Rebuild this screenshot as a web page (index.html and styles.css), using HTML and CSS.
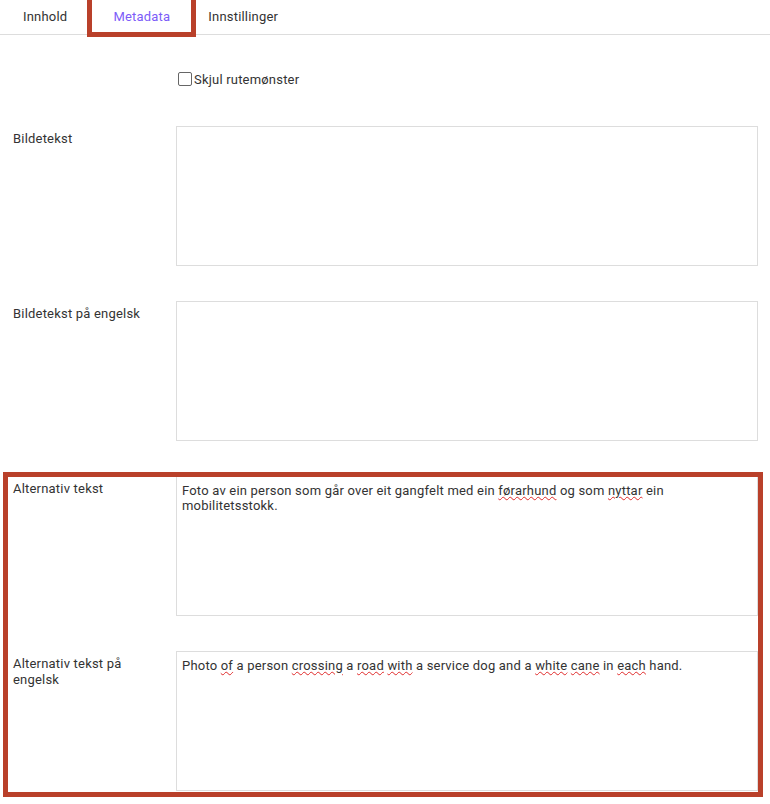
FILE: index.html
```html
<!DOCTYPE html>
<html lang="nn">
<head>
    <meta charset="UTF-8">
    <meta name="viewport" content="width=device-width, initial-scale=1.0">
    <title>Metadata</title>
    <link rel="stylesheet" href="styles.css">
</head>
<body>
    <div class="tabs">
        <div class="tab tab-first">Innhold</div>
        <div class="tab active marked">Metadata</div>
        <div class="tab tab-last">Innstillinger</div>
    </div>

    <div class="form">
        <div class="row check-row">
            <div class="label"></div>
            <label class="check">
                <span class="box"></span>Skjul rutemønster
            </label>
        </div>

        <div class="row">
            <div class="label">Bildetekst</div>
            <div class="field"></div>
        </div>

        <div class="row">
            <div class="label">Bildetekst på engelsk</div>
            <div class="field"></div>
        </div>

        <!-- marked group: alt text -->
        <div class="group marked-group">
            <div class="row">
                <div class="label">Alternativ tekst</div>
                <div class="field">Foto av ein person som går over eit gangfelt med ein <span class="spell">førarhund</span> og som <span class="spell">nyttar</span> ein mobilitetsstokk.</div>
            </div>

            <div class="row">
                <div class="label">Alternativ tekst på engelsk</div>
                <div class="field">Photo <span class="spell">of</span> a person <span class="spell">crossing</span> a <span class="spell">road</span> <span class="spell">with</span> a service dog and a <span class="spell">white</span> <span class="spell">cane</span> in <span class="spell">each</span> hand.</div>
            </div>
        </div>
    </div>
</body>
</html>
```

FILE: styles.css
```css
body {
    margin: 0;
    font-family: Roboto, "Liberation Sans", sans-serif;
    font-size: 13px;
    letter-spacing: 0.2px;
    color: #333;
    background: white;
}

.tabs {
    display: flex;
    height: 34px;
    border-bottom: 1px solid #ddd;
    padding-left: 4px;
}

.tab {
    padding: 0 19px;
    line-height: 34px;
    color: #333;
}

.tab.active {
    color: #7c5cf8;
    padding: 0 22px;
    margin-left: 5px;
}

.tab-last {
    padding-left: 16px;
}

/* red annotation boxes */
.marked {
    position: relative;
}

.marked::after {
    content: "";
    position: absolute;
    left: -4px;
    right: -4px;
    top: -6px;
    bottom: -3px;
    border: 5px solid #b9402a;
}

.form {
    padding: 34px 12px 0 13px;
}

.row {
    display: grid;
    grid-template-columns: 163px 1fr;
    margin-bottom: 35px;
}

.label {
    padding: 5px 13px 0 0;
    line-height: 16px;
}

.check-row {
    margin-bottom: 37px;
}

.check {
    display: flex;
    align-items: center;
    height: 20px;
    padding-left: 2px;
}

.box {
    width: 12px;
    height: 12px;
    border: 1px solid #666;
    border-radius: 2px;
    margin-right: 2px;
}

.field {
    height: 127px;
    border: 1px solid #ddd;
    padding: 6px 5px 5px 5px;
    line-height: 15px;
}

.spell {
    text-decoration: underline wavy #e02a2a;
    text-decoration-thickness: 1px;
    text-underline-offset: 1px;
}

.group {
    position: relative;
}

.marked-group::after {
    content: "";
    position: absolute;
    left: -10px;
    right: -5px;
    top: -4px;
    bottom: -6px;
    border: 5px solid #b9402a;
}
```
